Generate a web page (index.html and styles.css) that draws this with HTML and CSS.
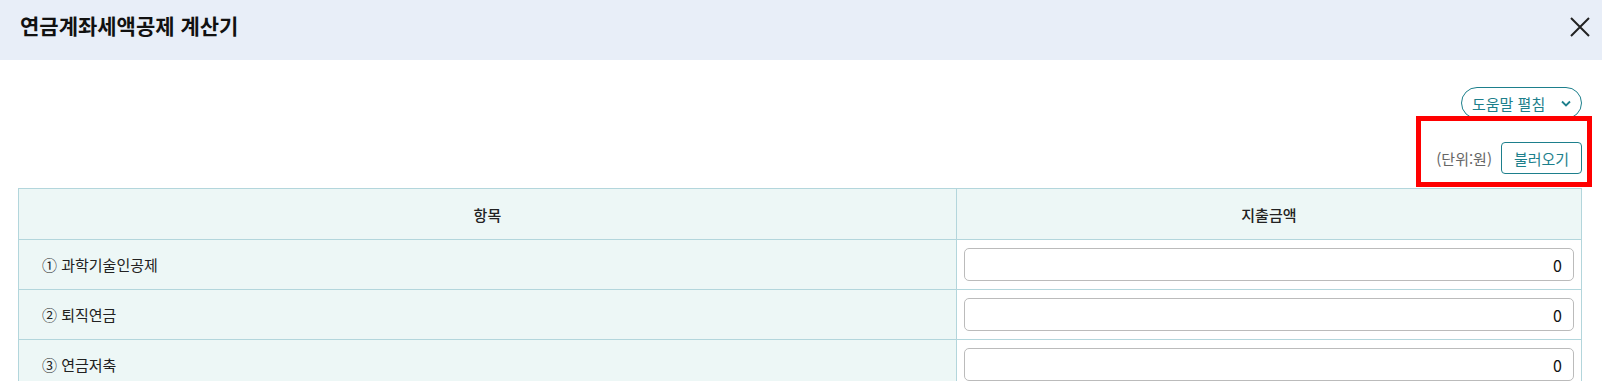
FILE: index.html
```html
<!DOCTYPE html>
<html lang="ko">
<head>
  <meta charset="UTF-8">
  <meta name="viewport" content="width=device-width, initial-scale=1.0">
  <title>연금계좌세액공제 계산기</title>
  <link rel="stylesheet" href="styles.css">
</head>
<body>
  <header class="modal-head">
    <h1>연금계좌세액공제 계산기</h1>
    <button type="button" class="close-btn" aria-label="닫기">
      <svg width="20" height="20" viewBox="0 0 20 20">
        <path d="M1 1 L19 19 M19 1 L1 19" stroke="#222" stroke-width="2" fill="none"/>
      </svg>
    </button>
  </header>

  <div class="modal-body">
    <div class="help-row">
      <button type="button" class="help-btn">
        도움말 펼침
        <svg width="10" height="7" viewBox="0 0 10 7">
          <path d="M1 1.5 L5 5.5 L9 1.5" stroke="#1d7f8c" stroke-width="1.8" fill="none"/>
        </svg>
      </button>
    </div>

    <div class="unit-row">
      <span class="unit">(단위:원)</span>
      <button type="button" class="load-btn">불러오기</button>
    </div>

    <table class="calc-table">
      <thead>
        <tr>
          <th class="col-item">항목</th>
          <th>지출금액</th>
        </tr>
      </thead>
      <tbody>
        <tr>
          <td class="item">① 과학기술인공제</td>
          <td class="amount"><input type="text" value="0"></td>
        </tr>
        <tr>
          <td class="item">② 퇴직연금</td>
          <td class="amount"><input type="text" value="0"></td>
        </tr>
        <tr>
          <td class="item">③ 연금저축</td>
          <td class="amount"><input type="text" value="0"></td>
        </tr>
      </tbody>
    </table>
  </div>

  <div class="highlight"></div>
</body>
</html>
```

FILE: styles.css
```css
body {
  margin: 0;
  font-family: "Noto Sans CJK KR", "Noto Sans", sans-serif;
  color: #222;
  background: #fff;
  overflow: hidden;
}
.modal-head {
  height: 60px;
  box-sizing: border-box;
  padding: 10px 12px 0 20px;
  background-color: #e8eef8;
  display: flex;
  align-items: flex-start;
  justify-content: space-between;
}
.modal-head h1 {
  margin: 0;
  font-size: 21px;
  line-height: 31px;
  font-weight: 700;
  color: #111;
}
.close-btn {
  margin-top: 7px;
  border: none;
  background: none;
  padding: 0;
  width: 20px;
  height: 20px;
  cursor: pointer;
}
.modal-body {
  padding: 27px 20px 0 18px;
}
.help-row {
  display: flex;
  justify-content: flex-end;
}
.help-btn {
  height: 32px;
  width: 121px;
  padding: 0 10px;
  border: 1px solid #1d7f8c;
  border-radius: 16px;
  background: #fff;
  color: #1d7f8c;
  font-family: inherit;
  font-size: 15px;
  display: flex;
  align-items: center;
  justify-content: space-between;
  cursor: pointer;
}
.unit-row {
  margin-top: 23px;
  display: flex;
  justify-content: flex-end;
  align-items: center;
  gap: 9px;
}
.unit {
  font-size: 15px;
  color: #666;
}
.load-btn {
  height: 32px;
  width: 81px;
  border: 1px solid #1d7f8c;
  border-radius: 4px;
  background: #fff;
  color: #1d7f8c;
  font-family: inherit;
  font-size: 15px;
  padding: 0;
  cursor: pointer;
}
.calc-table {
  margin-top: 14px;
  width: 100%;
  border-collapse: collapse;
  font-size: 15px;
}
.calc-table th,
.calc-table td {
  border: 1px solid #b3d6dc;
}
.calc-table th {
  height: 48px;
  background-color: #edf7f6;
  font-weight: 500;
  color: #222;
}
.col-item {
  width: 60%;
}
.calc-table td {
  height: 49px;
  padding: 0;
}
.item {
  background-color: #edf7f6;
  padding-left: 23px !important;
}
.amount {
  padding: 0 7px !important;
}
.amount input {
  display: block;
  width: 100%;
  height: 33px;
  box-sizing: border-box;
  border: 1px solid #bbb;
  border-radius: 5px;
  padding: 0 11px;
  text-align: right;
  font-family: inherit;
  font-size: 16px;
  color: #111;
}
.highlight {
  position: absolute;
  left: 1416px;
  top: 116px;
  width: 176px;
  height: 71px;
  box-sizing: border-box;
  border: 5px solid #ff0000;
}
```
